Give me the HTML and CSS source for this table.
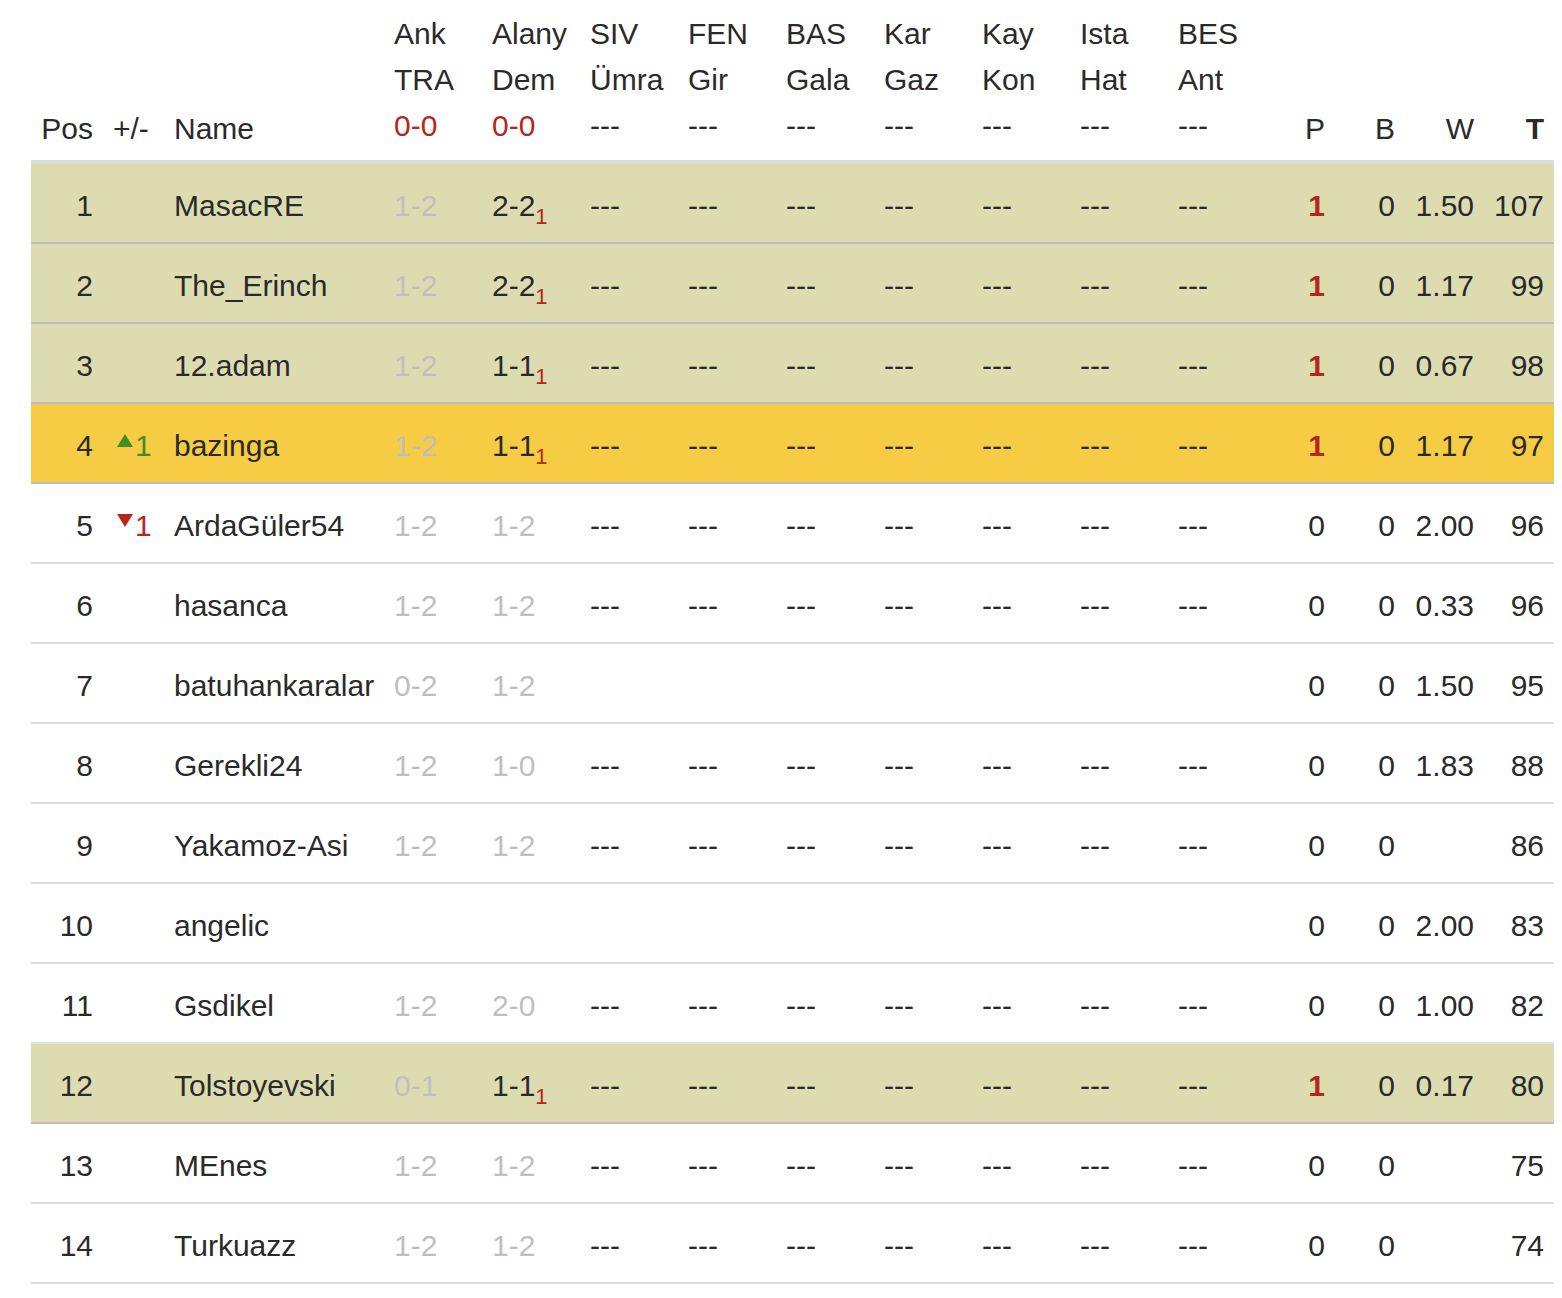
FILE: index.html
```html
<!DOCTYPE html>
<html lang="tr">
<head>
<meta charset="utf-8">
<title>Standings</title>
<link rel="stylesheet" href="styles.css">
</head>
<body>
<div class="wrap">
<table class="standings">
<colgroup>
<col class="c-pos"><col class="c-chg"><col class="c-name">
<col class="c-m"><col class="c-m"><col class="c-m"><col class="c-m"><col class="c-m"><col class="c-m"><col class="c-m"><col class="c-m"><col class="c-m">
<col class="c-p"><col class="c-b"><col class="c-w"><col class="c-t">
</colgroup>
<thead>
<tr>
<th class="num low">Pos</th>
<th class="low">+/-</th>
<th class="low">Name</th>
<th>Ank<br>TRA<br><span class="red">0-0</span></th>
<th>Alany<br>Dem<br><span class="red">0-0</span></th>
<th>SIV<br>Ümra<br>---</th>
<th>FEN<br>Gir<br>---</th>
<th>BAS<br>Gala<br>---</th>
<th>Kar<br>Gaz<br>---</th>
<th>Kay<br>Kon<br>---</th>
<th>Ista<br>Hat<br>---</th>
<th>BES<br>Ant<br>---</th>
<th class="num low">P</th>
<th class="num low">B</th>
<th class="num low">W</th>
<th class="num low bold">T</th>
</tr>
</thead>
<tbody>
<tr class="olive">
<td class="num">1</td><td></td><td>MasacRE</td>
<td class="dim">1-2</td><td>2-2<sub class="sub">1</sub></td>
<td>---</td><td>---</td><td>---</td><td>---</td><td>---</td><td>---</td><td>---</td>
<td class="num pts">1</td><td class="num">0</td><td class="num">1.50</td><td class="num">107</td>
</tr>
<tr class="olive">
<td class="num">2</td><td></td><td>The_Erinch</td>
<td class="dim">1-2</td><td>2-2<sub class="sub">1</sub></td>
<td>---</td><td>---</td><td>---</td><td>---</td><td>---</td><td>---</td><td>---</td>
<td class="num pts">1</td><td class="num">0</td><td class="num">1.17</td><td class="num">99</td>
</tr>
<tr class="olive">
<td class="num">3</td><td></td><td>12.adam</td>
<td class="dim">1-2</td><td>1-1<sub class="sub">1</sub></td>
<td>---</td><td>---</td><td>---</td><td>---</td><td>---</td><td>---</td><td>---</td>
<td class="num pts">1</td><td class="num">0</td><td class="num">0.67</td><td class="num">98</td>
</tr>
<tr class="yellow">
<td class="num">4</td><td class="chg up"><span class="tri tri-up"></span>1</td><td>bazinga</td>
<td class="dim">1-2</td><td>1-1<sub class="sub">1</sub></td>
<td>---</td><td>---</td><td>---</td><td>---</td><td>---</td><td>---</td><td>---</td>
<td class="num pts">1</td><td class="num">0</td><td class="num">1.17</td><td class="num">97</td>
</tr>
<tr>
<td class="num">5</td><td class="chg down"><span class="tri tri-down"></span>1</td><td>ArdaGüler54</td>
<td class="dim">1-2</td><td class="dim">1-2</td>
<td>---</td><td>---</td><td>---</td><td>---</td><td>---</td><td>---</td><td>---</td>
<td class="num">0</td><td class="num">0</td><td class="num">2.00</td><td class="num">96</td>
</tr>
<tr>
<td class="num">6</td><td></td><td>hasanca</td>
<td class="dim">1-2</td><td class="dim">1-2</td>
<td>---</td><td>---</td><td>---</td><td>---</td><td>---</td><td>---</td><td>---</td>
<td class="num">0</td><td class="num">0</td><td class="num">0.33</td><td class="num">96</td>
</tr>
<tr>
<td class="num">7</td><td></td><td>batuhankaralar</td>
<td class="dim">0-2</td><td class="dim">1-2</td>
<td></td><td></td><td></td><td></td><td></td><td></td><td></td>
<td class="num">0</td><td class="num">0</td><td class="num">1.50</td><td class="num">95</td>
</tr>
<tr>
<td class="num">8</td><td></td><td>Gerekli24</td>
<td class="dim">1-2</td><td class="dim">1-0</td>
<td>---</td><td>---</td><td>---</td><td>---</td><td>---</td><td>---</td><td>---</td>
<td class="num">0</td><td class="num">0</td><td class="num">1.83</td><td class="num">88</td>
</tr>
<tr>
<td class="num">9</td><td></td><td>Yakamoz-Asi</td>
<td class="dim">1-2</td><td class="dim">1-2</td>
<td>---</td><td>---</td><td>---</td><td>---</td><td>---</td><td>---</td><td>---</td>
<td class="num">0</td><td class="num">0</td><td class="num"></td><td class="num">86</td>
</tr>
<tr>
<td class="num">10</td><td></td><td>angelic</td>
<td></td><td></td>
<td></td><td></td><td></td><td></td><td></td><td></td><td></td>
<td class="num">0</td><td class="num">0</td><td class="num">2.00</td><td class="num">83</td>
</tr>
<tr>
<td class="num">11</td><td></td><td>Gsdikel</td>
<td class="dim">1-2</td><td class="dim">2-0</td>
<td>---</td><td>---</td><td>---</td><td>---</td><td>---</td><td>---</td><td>---</td>
<td class="num">0</td><td class="num">0</td><td class="num">1.00</td><td class="num">82</td>
</tr>
<tr class="olive">
<td class="num">12</td><td></td><td>Tolstoyevski</td>
<td class="dim">0-1</td><td>1-1<sub class="sub">1</sub></td>
<td>---</td><td>---</td><td>---</td><td>---</td><td>---</td><td>---</td><td>---</td>
<td class="num pts">1</td><td class="num">0</td><td class="num">0.17</td><td class="num">80</td>
</tr>
<tr>
<td class="num">13</td><td></td><td>MEnes</td>
<td class="dim">1-2</td><td class="dim">1-2</td>
<td>---</td><td>---</td><td>---</td><td>---</td><td>---</td><td>---</td><td>---</td>
<td class="num">0</td><td class="num">0</td><td class="num"></td><td class="num">75</td>
</tr>
<tr>
<td class="num">14</td><td></td><td>Turkuazz</td>
<td class="dim">1-2</td><td class="dim">1-2</td>
<td>---</td><td>---</td><td>---</td><td>---</td><td>---</td><td>---</td><td>---</td>
<td class="num">0</td><td class="num">0</td><td class="num"></td><td class="num">74</td>
</tr>
</tbody>
</table>
</div>
</body>
</html>
```
FILE: styles.css
```css
html, body {
  margin: 0;
  padding: 0;
  background: #ffffff;
}

.wrap {
  padding: 0 0 0 31px;
}

.standings {
  border-collapse: collapse;
  table-layout: fixed;
  width: 1523px;
  font-family: "Liberation Sans", Arial, Helvetica, sans-serif;
  font-size: 30px;
  line-height: 46px;
  color: #2a2a2a;
}

.c-pos { width: 72px; }
.c-chg { width: 61px; }
.c-name { width: 220px; }
.c-m { width: 98px; }
.c-p { width: 69px; }
.c-b { width: 70px; }
.c-w { width: 79px; }
.c-t { width: 70px; }

.standings th {
  font-weight: normal;
  text-align: left;
  vertical-align: bottom;
  padding: 11px 10px 11px 10px;
  border-bottom: 4px solid #dcdcdc;
  white-space: nowrap;
}

.standings th.low {
  padding-bottom: 8px;
}

.standings th.bold {
  font-weight: bold;
}

.standings td {
  padding: 19px 10px 13px 10px;
  vertical-align: top;
  white-space: nowrap;
  border-bottom: 2px solid #dedede;
  height: 46px;
}

.standings .num {
  text-align: right;
}

.standings tr.olive td {
  background: #dddcb1;
  border-bottom-color: #bdbdbd;
}

.standings tr.yellow td {
  background: #f6cc45;
  border-bottom-color: #bdbdbd;
}

.red {
  color: #b3281a;
}

.dim {
  color: #bfbfbf;
}

.pts {
  color: #b3281a;
  font-weight: bold;
}

.sub {
  font-size: 22px;
  line-height: 0;
  vertical-align: -8px;
  color: #b3281a;
}

.chg.up {
  color: #3f8f25;
}

.chg.down {
  color: #b3281a;
}

.tri {
  display: inline-block;
  width: 0;
  height: 0;
  margin: 0 2px 0 4px;
  border-left: 8px solid transparent;
  border-right: 8px solid transparent;
  vertical-align: 9px;
}

.tri-up {
  border-bottom: 13px solid #3f8f25;
}

.tri-down {
  border-top: 13px solid #b3281a;
}
```
